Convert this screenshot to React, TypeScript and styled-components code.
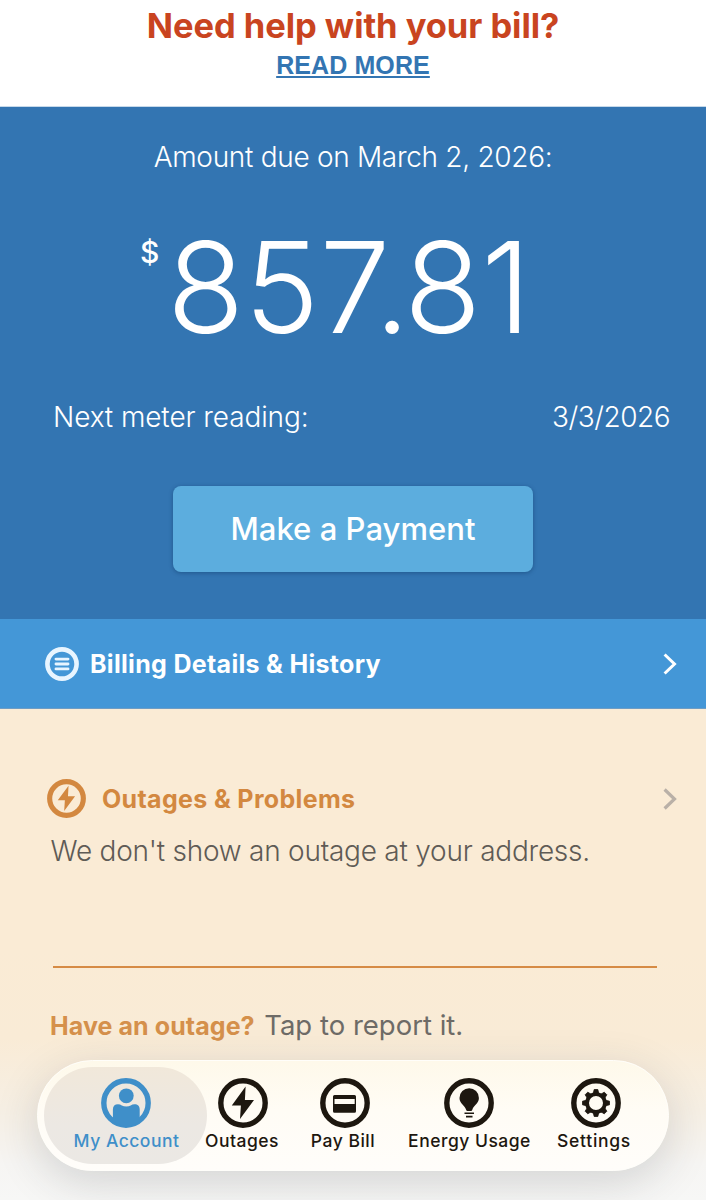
import React from "react";
import styled, { createGlobalStyle } from "styled-components";

const GlobalStyle = createGlobalStyle`
  *, *::before, *::after { box-sizing: border-box; }
  body { margin: 0; background: #f7f6f3; font-family: Inter, "Liberation Sans", sans-serif; }
  button { font: inherit; border: 0; padding: 0; background: none; }
`;

const Screen = styled.main`
  position: relative;
  width: 706px;
  height: 1200px;
  overflow: hidden;
  display: flex;
  flex-direction: column;
`;

const HelpBanner = styled.header`
  height: 107px;
  padding-top: 5px;
  background: #fff;
  border-bottom: 1px solid #c6d9ea;
  display: flex;
  flex-direction: column;
  align-items: center;
  flex: none;
`;

const HelpTitle = styled.h1`
  margin: 0;
  font-size: 34.5px;
  line-height: 41px;
  font-weight: 700;
  letter-spacing: -0.05px;
  color: #c94420;
`;

const ReadMore = styled.a`
  font: 700 25px/39px "Liberation Sans", Arial, sans-serif;
  letter-spacing: 0.1px;
  color: #3375b2;
  text-decoration: underline;
  text-decoration-thickness: 1.5px;
  text-underline-offset: 2px;
  text-decoration-skip-ink: none;
`;

const BillPanel = styled.section`
  height: 512px;
  flex: none;
  padding-top: 30px;
  background: #3375b2;
  color: #fff;
  display: flex;
  flex-direction: column;
  align-items: center;
`;

const DueDate = styled.div`
  font-size: 28px;
  line-height: 40px;
  font-weight: 300;
  letter-spacing: -0.3px;
`;

const Amount = styled.div`
  align-self: stretch;
  height: 150px;
  margin-top: 35px;
  padding-left: 140px;
  display: flex;
  align-items: flex-start;
`;

const Currency = styled.span`
  width: 27px;
  margin-top: 22px;
  font-size: 30px;
  line-height: 36px;
  font-weight: 500;
`;

const AmountValue = styled.span`
  font-size: 126.5px;
  line-height: 150px;
  font-weight: 300;
`;

const Kern = styled.span<{ $by: number }>`
  letter-spacing: ${(p) => p.$by}px;
`;

const MeterRow = styled.div`
  align-self: stretch;
  margin-top: 35px;
  padding: 0 36px 0 53px;
  display: flex;
  justify-content: space-between;
  font-size: 28px;
  line-height: 40px;
  font-weight: 300;
  letter-spacing: -0.1px;
`;

const MeterDate = styled.span`
  letter-spacing: -0.5px;
`;

const PayButton = styled.button`
  width: 360px;
  height: 86px;
  margin-top: 49px;
  border-radius: 8px;
  background: #5cadde;
  color: #fff;
  font-size: 31px;
  line-height: 40px;
  font-weight: 500;
  letter-spacing: 0.05px;
  box-shadow: 0 1px 4px rgba(10, 50, 95, 0.45);
`;

const BillingRow = styled.section`
  height: 90px;
  flex: none;
  padding: 0 28px 0 45px;
  display: flex;
  align-items: center;
  background: #4497d7;
  border-bottom: 1px solid #6f9dc4;
  color: #fff;
`;

const RowTitle = styled.h2<{ $gap: number; $spacing: number }>`
  flex: 1;
  margin: 0 0 0 ${(p) => p.$gap}px;
  font-size: 25px;
  line-height: 40px;
  font-weight: 700;
  letter-spacing: ${(p) => p.$spacing}px;
`;

const OutagePanel = styled.section`
  flex: 1;
  padding-top: 69px;
  background: linear-gradient(#faebd5 0, #faebd5 240px, #f9ebd6 330px, #f6efe4 400px, #f6f5f3 455px, #f7f7f6 491px);
`;

const OutageHeader = styled.div`
  height: 41px;
  padding: 0 28px 0 47px;
  display: flex;
  align-items: center;
  color: #d38840;
`;

const OutageStatus = styled.p`
  margin: 12px 0 0;
  padding-left: 50.5px;
  font-size: 28px;
  line-height: 40px;
  font-weight: 300;
  letter-spacing: -0.235px;
  color: #5f5b56;
`;

const Divider = styled.hr`
  width: 604px;
  height: 2px;
  margin: 95px 0 0 53px;
  border: 0;
  background: #d68b45;
`;

const ReportLine = styled.div`
  display: flex;
  align-items: baseline;
  gap: 9.5px;
  margin-top: 37px;
  padding-left: 50px;
  line-height: 40px;
`;

const ReportPrompt = styled.strong`
  font-size: 25px;
  font-weight: 700;
  letter-spacing: 0.08px;
  color: #d5904b;
`;

const ReportAction = styled.span`
  font-size: 27.5px;
  font-weight: 400;
  letter-spacing: 0;
  color: #6e6b67;
`;

const TabBar = styled.nav`
  position: absolute;
  left: 37px;
  top: 1060px;
  width: 632px;
  height: 111px;
  padding: 6px 0 6px 6px;
  border-radius: 56px;
  border: 1px solid #fffefa;
  background: linear-gradient(#fef9ea, #fffcf5 45%, #fffdfa);
  box-shadow: 0 12px 44px rgba(40, 45, 55, 0.17);
  display: flex;
`;

const Tab = styled.a<{ $width: number; $spacing: number; $active?: boolean; $nudge?: number }>`
  width: ${(p) => p.$width}px;
  height: 97px;
  padding: 11px 0 0 ${(p) => (p.$active ? 2 : 0)}px;
  border-radius: 49px;
  display: flex;
  flex-direction: column;
  align-items: center;
  white-space: nowrap;
  font-size: 17.5px;
  line-height: 24px;
  font-weight: 500;
  letter-spacing: ${(p) => p.$spacing}px;
  color: ${(p) => (p.$active ? "#3f8fc9" : "#1d170f")};
  background: ${(p) => (p.$active ? "linear-gradient(#f1e8da, #ece8e3 60%, #ebe8e4)" : "none")};

  svg { margin: 0 0 1px ${(p) => (p.$nudge ?? 0)}px; }
`;

const Chevron = ({ color, width }: { color: string; width: number }) => (
  <svg width="16" height="24" viewBox="0 0 16 24" fill="none">
    <path d="M2.6 2.5 12.5 12 2.6 21.5" stroke={color} strokeWidth={width} />
  </svg>
);

const Ring = ({ children, label }: { children: React.ReactNode; label: string }) => (
  <svg width="50" height="50" viewBox="0 0 50 50" fill="none" aria-label={label}>
    <circle cx="25" cy="25" r="22.2" stroke="currentColor" strokeWidth="5.4" />
    {children}
  </svg>
);

const bolt = "M27.6 8.5 13.8 27.4H22.9L22 41 36 22H26.9Z";

const gearTeeth = [0, 45, 90, 135, 180, 225, 270, 315];

export default function App() {
  return (
    <Screen>
      <GlobalStyle />
      <HelpBanner>
        <HelpTitle>Need help with your bill?</HelpTitle>
        <ReadMore>READ MORE</ReadMore>
      </HelpBanner>

      <BillPanel>
        <DueDate>Amount due on March 2, 2026:</DueDate>
        <Amount>
          <Currency>$</Currency>
          <AmountValue>85<Kern $by={-16}>7</Kern><Kern $by={-6}>.</Kern>81</AmountValue>
        </Amount>
        <MeterRow>
          <span>Next meter reading:</span>
          <MeterDate>3/3/2026</MeterDate>
        </MeterRow>
        <PayButton>Make a Payment</PayButton>
      </BillPanel>

      <BillingRow>
        <svg width="34" height="34" viewBox="0 0 34 34" fill="none" stroke="#e8f5ff">
          <circle cx="17" cy="17" r="14.6" strokeWidth="4.6" />
          <path d="M11 12.1H23M11 17H23M11 21.9H23" strokeWidth="2.9" strokeLinecap="round" />
        </svg>
        <RowTitle $gap={11} $spacing={0.31}>Billing Details &amp; History</RowTitle>
        <Chevron color="#fff" width={3} />
      </BillingRow>

      <OutagePanel>
        <OutageHeader>
          <svg width="39" height="39" viewBox="0 0 50 50" fill="none">
            <circle cx="25" cy="25" r="21.6" stroke="currentColor" strokeWidth="6.6" />
            <path d={bolt} fill="currentColor" />
          </svg>
          <RowTitle $gap={16} $spacing={0.34}>Outages &amp; Problems</RowTitle>
          <Chevron color="#b9b0a7" width={3.2} />
        </OutageHeader>
        <OutageStatus>We don't show an outage at your address.</OutageStatus>
        <Divider />
        <ReportLine>
          <ReportPrompt>Have an outage?</ReportPrompt>
          <ReportAction>Tap to report it.</ReportAction>
        </ReportLine>
      </OutagePanel>

      <TabBar>
        <Tab $width={163} $spacing={0.5} $nudge={-1} $active>
          <Ring label="Account">
            <circle cx="25.3" cy="17.8" r="7.4" fill="currentColor" />
            <path d="M11.9 44V31.5C11.9 28 13.8 26.3 17 26.3 20 26.3 21.5 28.6 25.3 28.6 29 28.6 30.5 26.3 33.5 26.3 36.7 26.3 38.7 28 38.7 31.5V44L25 49Z" fill="currentColor" />
          </Ring>
          My Account
        </Tab>
        <Tab $width={70} $spacing={0.49} $nudge={2}>
          <Ring label="Outages">
            <path d={bolt} fill="currentColor" />
          </Ring>
          Outages
        </Tab>
        <Tab $width={132} $spacing={0.5} $nudge={3}>
          <Ring label="Pay bill">
            <path fillRule="evenodd" d="M14.5 17H34.5Q36 17 36 18.5V33.3Q36 34.8 34.5 34.8H14.5Q13 34.8 13 33.3V18.5Q13 17 14.5 17ZM14.5 21V26H34.7V21Z" fill="currentColor" />
          </Ring>
          Pay Bill
        </Tab>
        <Tab $width={121} $spacing={0.5} $nudge={-1}>
          <Ring label="Energy">
            <path d="M25.2 10.2A9.7 9.7 0 0 1 34.9 19.9C34.9 25.5 29.6 27 28.4 31.6Q28.2 32.9 27.2 32.9H23.2Q22.2 32.9 22 31.6C20.8 27 15.5 25.5 15.5 19.9A9.7 9.7 0 0 1 25.2 10.2Z" fill="currentColor" />
            <path d="M20.5 35.2H30M22 38.6H28.5" stroke="currentColor" strokeWidth="1.6" />
          </Ring>
          Energy Usage
        </Tab>
        <Tab $width={128} $spacing={0.7} $nudge={3}>
          <Ring label="Settings">
            <circle cx="25" cy="25" r="8.9" stroke="currentColor" strokeWidth="3.8" />
            {gearTeeth.map((angle) => (
              <path
                key={angle}
                d="M22.2 15.5 23.2 11.5H26.8L27.8 15.5Z"
                fill="currentColor"
                stroke="currentColor"
                strokeWidth="0.8"
                strokeLinejoin="round"
                transform={`rotate(${angle} 25 25)`}
              />
            ))}
          </Ring>
          Settings
        </Tab>
      </TabBar>
    </Screen>
  );
}
